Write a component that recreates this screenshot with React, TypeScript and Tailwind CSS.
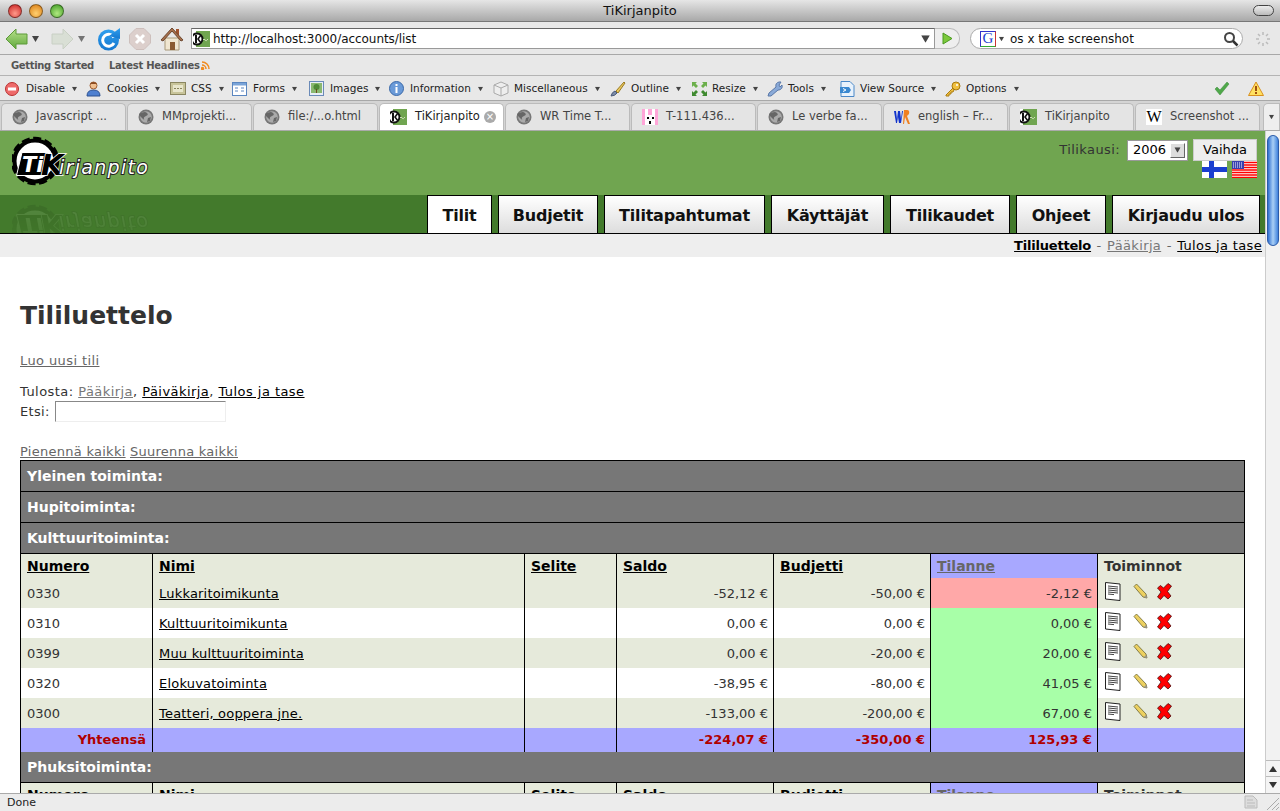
import React from "react";

const chrome = "font-['DejaVu_Sans',sans-serif]";

const Caret = ({ className = "" }: { className?: string }) => (
  <svg width="7" height="6" viewBox="0 0 7 6" className={className}>
    <path d="M0 0h7L3.5 6z" fill="#444" />
  </svg>
);

const Favicon = () => (
  <svg width="17" height="16" viewBox="0 0 17 16" className="shrink-0">
    <rect width="17" height="16" fill="#70a550" />
    <rect width="3" height="16" fill="#fff" />
    <circle cx="4" cy="8" r="6.500" fill="#111" />
    <circle cx="4" cy="8" r="4.500" fill="#fff" />
    <path d="M2 4h2v8H2zM4 8l3-4h2L6 8l3 4H7z" fill="#111" />
    <path d="M10 9q1-2 2 0t3-1" stroke="#cde0b8" strokeWidth="1" fill="none" />
  </svg>
);

const Globe = () => (
  <svg width="16" height="16" viewBox="0 0 16 16" className="shrink-0">
    <circle cx="8" cy="8" r="7.500" fill="#777" />
    <circle cx="8" cy="8" r="5.800" fill="#aaa" />
    <path d="M4 4q3-2 5 0t-1 3-2 3-3-2 1-4zM10 9l3-1-1 4-3 1z" fill="#666" />
  </svg>
);

const TUX = () => (
  <svg width="16" height="16" viewBox="0 0 16 16" className="shrink-0">
    <rect width="16" height="16" fill="#ffa6d8" />
    <rect x="3" y="0" width="3" height="7" fill="#fff" />
    <rect x="10" y="0" width="3" height="7" fill="#fff" />
    <rect x="3" y="6" width="10" height="10" fill="#fff" />
    <rect x="5" y="8" width="2" height="2" fill="#000" />
    <rect x="10" y="8" width="2" height="2" fill="#000" />
    <rect x="7" y="12" width="2" height="3" fill="#000" />
  </svg>
);

const WrIcon = () => (
  <svg width="16" height="16" viewBox="0 0 16 16" className="shrink-0">
    <path d="M0 2h2l1 8 1-8h2l1 8 1-8h1L7 14H5L4 8l-1 6H2z" fill="#1133cc" />
    <path d="M10 1h3q3 0 2 4l-2 2 3 8h-2l-3-7-1 7h-1z" fill="#f08020" />
  </svg>
);

const WikiIcon = () => (
  <span className="w-4 h-4 bg-white shrink-0 flex items-center justify-center font-['Liberation_Serif',serif] text-[16px] leading-none text-black">
    W
  </span>
);

const TrafficLight = ({ className }: { className: string }) => (
  <span className={`w-[14px] h-[14px] rounded-full border border-black/40 ${className}`} />
);

const BackArrow = () => (
  <svg width="23" height="22" viewBox="0 0 23 22">
    <defs>
      <linearGradient id="back" x1="0" y1="0" x2="0" y2="1">
        <stop offset="0" stopColor="#b8e08a" />
        <stop offset="1" stopColor="#5fa83c" />
      </linearGradient>
    </defs>
    <path d="M1 11 11 1v5h11v10H11v5z" fill="url(#back)" stroke="#5c9a38" />
  </svg>
);

const ForwardArrow = () => (
  <svg width="23" height="22" viewBox="0 0 23 22">
    <path d="M22 11 12 1v5H1v10h11v5z" fill="#d3dccd" stroke="#bcc6b6" />
  </svg>
);

const Reload = () => (
  <svg width="24" height="24" viewBox="0 0 24 24">
    <defs>
      <linearGradient id="reload" x1="0" y1="0" x2="0" y2="1">
        <stop offset="0" stopColor="#2f9fee" />
        <stop offset="1" stopColor="#1577cf" />
      </linearGradient>
    </defs>
    <circle cx="11.500" cy="13" r="10.500" fill="url(#reload)" />
    <path d="M17 10.500A6 6 0 1 0 17 16" stroke="#fff" strokeWidth="3" fill="none" />
    <path d="M12 9 23 1v11z" fill="url(#reload)" />
  </svg>
);

const StopIcon = () => (
  <svg width="22" height="22" viewBox="0 0 22 22">
    <path d="M7 .5h8L21.500 7v8L15 21.500H7L.5 15V7z" fill="#dccfcc" stroke="#cdbfbc" />
    <path d="m7 7 8 8M15 7l-8 8" stroke="#fff" strokeWidth="3" />
  </svg>
);

const HomeIcon = () => (
  <svg width="24" height="24" viewBox="0 0 24 24">
    <rect x="16" y="2" width="3" height="7" fill="#a0522d" />
    <path d="M5 11h14v12H5z" fill="#f0e6d0" stroke="#a89878" />
    <path d="M12 1 1 13l2 1 9-10 9 10 2-1z" fill="#a8704c" stroke="#6c4830" />
    <rect x="10" y="15" width="5" height="8" fill="#8a5a30" />
  </svg>
);

const DisableIcon = () => (
  <svg width="14" height="14" viewBox="0 0 14 14">
    <circle cx="7" cy="7" r="6.500" fill="#ee6a6a" stroke="#b83030" />
    <rect x="3" y="5.500" width="8" height="3" fill="#fff" />
  </svg>
);

const CookiesIcon = () => (
  <svg width="15" height="16" viewBox="0 0 15 16">
    <circle cx="7.500" cy="4.500" r="3.500" fill="#f0c090" stroke="#a06030" />
    <path d="M4 3q3-4 7 0z" fill="#8a4a20" />
    <path d="M1 15q0-6 6.500-6T14 15z" fill="#4f80d0" stroke="#2c5090" />
  </svg>
);

const CssIcon = () => (
  <svg width="16" height="13" viewBox="0 0 16 13">
    <rect x=".5" y=".5" width="15" height="12" fill="#c8c49a" stroke="#8a8660" />
    <rect x="3" y="3" width="10" height="7" fill="#e8e6cc" />
    <path d="M4 6.500h8" stroke="#88845c" strokeDasharray="2 1" />
  </svg>
);

const FormsIcon = () => (
  <svg width="15" height="14" viewBox="0 0 15 14">
    <rect x=".5" y=".5" width="14" height="13" fill="#fff" stroke="#5a86c0" />
    <rect x="1" y="1" width="13" height="2.500" fill="#7aa4d8" />
    <path d="M3 6h3M3 9h3M9 6h3M9 9h3" stroke="#5a86c0" />
  </svg>
);

const ImagesIcon = () => (
  <svg width="15" height="15" viewBox="0 0 15 15">
    <rect x=".5" y=".5" width="14" height="14" fill="#e8eef8" stroke="#6a8ab8" />
    <rect x="2" y="2" width="11" height="10" fill="#8ab870" />
    <circle cx="7.500" cy="6" r="3" fill="#4f8a38" />
    <rect x="7" y="8" width="1" height="4" fill="#6a4a20" />
  </svg>
);

const InfoIcon = () => (
  <svg width="15" height="15" viewBox="0 0 15 15">
    <circle cx="7.500" cy="7.500" r="7" fill="#6a9ad8" stroke="#3a68a8" />
    <rect x="6.500" y="6" width="2" height="6" fill="#fff" />
    <rect x="6.500" y="3" width="2" height="2" fill="#fff" />
  </svg>
);

const MiscIcon = () => (
  <svg width="16" height="16" viewBox="0 0 16 16">
    <path d="M8 1 15 4v8l-7 3-7-3V4z" fill="#eee" stroke="#aaa" />
    <path d="M1 4l7 3 7-3M8 7v8" fill="none" stroke="#aaa" />
  </svg>
);

const OutlineIcon = () => (
  <svg width="16" height="16" viewBox="0 0 16 16">
    <path d="M14 1 6 10l2 2 7-10z" fill="#e8c860" stroke="#9a7a20" />
    <path d="M5 10q-3 1-4 5 4 0 6-3z" fill="#7a8aa8" stroke="#4a5a78" />
  </svg>
);

const ResizeIcon = () => (
  <svg width="17" height="16" viewBox="0 0 17 16">
    <path d="M1 1h5L4.500 2.500 7 5 5 7 2.500 4.500 1 6zM16 1h-5l1.500 1.500L10 5l2 2 2.500-2.500L16 6z" fill="#6cb04c" />
    <path d="M1 15h5l-1.500-1.500L7 11 5 9l-2.500 2.500L1 10zM16 15h-5l1.500-1.500L10 11l2-2 2.500 2.500L16 10z" fill="#3f8a30" />
  </svg>
);

const ToolsIcon = () => (
  <svg width="16" height="16" viewBox="0 0 16 16">
    <path d="M1 15 2 12l7-6q-1-4 3-5l2 0-2 3 1 2 2-2q1 4-3 5l-1 0-7 6z" fill="#8aaad8" stroke="#5a78a8" />
  </svg>
);

const ViewSourceIcon = () => (
  <svg width="16" height="16" viewBox="0 0 16 16">
    <path d="M2 .5h9l4 4v11H2z" fill="#e8f2fc" stroke="#4a88c8" />
    <path d="M1 6h9l2 3-2 3H1z" fill="#3a88d0" />
    <path d="M4 7.500 7 9 4 10.500" stroke="#fff" fill="none" />
  </svg>
);

const KeyIcon = () => (
  <svg width="16" height="16" viewBox="0 0 16 16">
    <circle cx="11" cy="5" r="4" fill="#f0c040" stroke="#a87a10" />
    <circle cx="12" cy="4" r="1" fill="#fff" />
    <path d="m8 7-7 7v1h3v-2h2v-2h2l1-2z" fill="#f0c040" stroke="#a87a10" />
  </svg>
);

const CheckIcon = () => (
  <svg width="16" height="14" viewBox="0 0 16 14">
    <path d="M1 7 3 5l3 3 7-8 2 2-9 11z" fill="#4fa84a" stroke="#3a8838" strokeWidth=".5" />
  </svg>
);

const WarnIcon = () => (
  <svg width="16" height="15" viewBox="0 0 16 15">
    <path d="M8 1 15.500 14.500H.5z" fill="#ffe060" stroke="#d89020" />
    <rect x="7" y="5" width="2" height="5" fill="#a05010" />
    <rect x="7" y="11" width="2" height="2" fill="#a05010" />
  </svg>
);

const GoogleIcon = () => (
  <span className="w-[16px] h-[16px] bg-white border border-t-[#33c] border-l-[#33c] border-b-[#3a3] border-r-[#c33] flex items-center justify-center font-['Liberation_Serif',serif] text-[15px] leading-none text-[#2340d0]">
    G
  </span>
);

const Throbber = () => (
  <svg width="16" height="16" viewBox="0 0 16 16" stroke="#bbb" strokeWidth="1.500">
    <path d="M8 1v3M13 3l-2 2M15 8h-3M13 13l-2-2M8 15v-3M3 13l2-2M1 8h3M3 3l2 2" />
  </svg>
);

const Magnifier = () => (
  <svg width="16" height="16" viewBox="0 0 16 16" fill="none">
    <circle cx="6.500" cy="6.500" r="4.500" stroke="#444" strokeWidth="2" />
    <path d="m10 10 4.500 4.500" stroke="#333" strokeWidth="2.500" />
  </svg>
);

const devTools = [
  { label: "Disable", icon: <DisableIcon />, width: "w-[81px]" },
  { label: "Cookies", icon: <CookiesIcon />, width: "w-[84px]" },
  { label: "CSS", icon: <CssIcon />, width: "w-[62px]" },
  { label: "Forms", icon: <FormsIcon />, width: "w-[77px]" },
  { label: "Images", icon: <ImagesIcon />, width: "w-[80px]" },
  { label: "Information", icon: <InfoIcon />, width: "w-[104px]" },
  { label: "Miscellaneous", icon: <MiscIcon />, width: "w-[117px]" },
  { label: "Outline", icon: <OutlineIcon />, width: "w-[81px]" },
  { label: "Resize", icon: <ResizeIcon />, width: "w-[76px]" },
  { label: "Tools", icon: <ToolsIcon />, width: "w-[72px]" },
  { label: "View Source", icon: <ViewSourceIcon />, width: "w-[106px]" },
  { label: "Options", icon: <KeyIcon />, width: "w-[84px]" },
];

const tabs = [
  { label: "Javascript ...", icon: <Globe /> },
  { label: "MMprojekti...", icon: <Globe /> },
  { label: "file:/...o.html", icon: <Globe /> },
  { label: "TiKirjanpito", icon: <Favicon />, active: true },
  { label: "WR Time T...", icon: <Globe /> },
  { label: "T-111.436...", icon: <TUX /> },
  { label: "Le verbe fa...", icon: <Globe /> },
  { label: "english – Fr...", icon: <WrIcon /> },
  { label: "TiKirjanpito", icon: <Favicon /> },
  { label: "Screenshot ...", icon: <WikiIcon /> },
];

const BrowserChrome = () => (
  <div className={`${chrome} text-[11px] text-[#222] shrink-0`}>
    <div className="h-[22px] bg-gradient-to-b from-[#e6e6e6] to-[#a9a9a9] border-b border-[#777] flex items-center pl-2 pr-[6px]">
      <div className="w-[100px] flex gap-[7px]">
        <TrafficLight className="bg-[radial-gradient(circle_at_50%_70%,#ff9a8a,#c81e1e)]" />
        <TrafficLight className="bg-[radial-gradient(circle_at_50%_70%,#ffd070,#d87a10)]" />
        <TrafficLight className="bg-[radial-gradient(circle_at_50%_70%,#b0e880,#3c9a20)]" />
      </div>
      <span className="flex-1 text-center text-[13px] text-[#111]">TiKirjanpito</span>
      <div className="w-[102px] flex justify-end">
        <span className="w-[21px] h-[11px] rounded-[6px] border border-[#444] bg-gradient-to-b from-[#eee] to-[#bbb]" />
      </div>
    </div>

    <div className="h-[33px] pt-[1px] bg-[#e8e8e8] border-b border-[#a8a8a8] flex items-center">
      <div className="ml-[5px] w-[46px] flex items-center gap-[4px]">
        <BackArrow />
        <Caret />
      </div>
      <div className="w-[46px] flex items-center gap-[4px] opacity-70">
        <ForwardArrow />
        <Caret />
      </div>
      <div className="w-[32px]"><Reload /></div>
      <div className="w-[31px]"><StopIcon /></div>
      <div className="w-[31px]"><HomeIcon /></div>
      <div className="w-[744px] h-[21px] bg-white border border-[#999] border-t-[#666] flex items-center pl-[1px] pr-[4px]">
        <Favicon />
        <span className="ml-[3px] flex-1 text-[12px] tracking-[-0.05px] text-[#111]">http://localhost:3000/accounts/list</span>
        <Caret className="scale-125 mr-[1px]" />
      </div>
      <div className="w-[25px] h-[21px] bg-[#eee] border border-l-0 border-[#bbb] rounded-r-[10px] flex items-center justify-center">
        <svg width="11" height="13" viewBox="0 0 11 13">
          <path d="M1 1 10 6.500 1 12z" fill="#7cc93c" stroke="#4a9a20" />
        </svg>
      </div>
      <div className="ml-[10px] w-[273px] h-[21px] bg-white border border-[#aaa] rounded-[11px] flex items-center pl-[9px] pr-[3px]">
        <GoogleIcon />
        <Caret className="ml-[2px] scale-75" />
        <span className="ml-[5px] flex-1 text-[12px] text-[#111]">os x take screenshot</span>
        <Magnifier />
      </div>
      <div className="ml-[12px]"><Throbber /></div>
    </div>

    <div className="h-[21px] pt-[1px] bg-[#e8e8e8] border-b border-[#b4b4b4] flex items-center pl-[11px] font-bold text-[#555] text-[10px]">
      <span className="w-[98px] tracking-[-0.35px]">Getting Started</span>
      <span className="tracking-[-0.25px]">Latest Headlines</span>
      <svg width="9" height="9" viewBox="0 0 9 9" className="ml-[1px]" fill="none" stroke="#f08a20" strokeWidth="1.500">
        <path d="M1 1a7 7 0 0 1 7 7M1 4a4 4 0 0 1 4 4" />
        <circle cx="1.500" cy="7.500" r="1" fill="#f08a20" />
      </svg>
    </div>

    <div className="h-[25px] pt-[1px] bg-[#e8e8e8] border-b border-[#a8a8a8] flex items-center pl-[5px]">
      {devTools.map((tool) => (
        <div key={tool.label} className={`${tool.width} flex items-center shrink-0`}>
          <span className="w-[21px] flex items-center">{tool.icon}</span>
          <span className="text-[10.500px] whitespace-nowrap">{tool.label}</span>
          <Caret className="ml-[6px] scale-75" />
        </div>
      ))}
      <div className="ml-[185px]"><CheckIcon /></div>
      <div className="ml-[18px]"><WarnIcon /></div>
    </div>

    <div className="h-[30px] bg-[#d4d4d4] border-b border-[#aaa] flex items-end pl-[1px] gap-[1px]">
      {tabs.map((tab) => (
        <div
          key={tab.label + tab.active}
          className={`w-[125px] h-[27px] rounded-t-[5px] border border-b-0 border-[#bbb] flex items-center pl-[10px] text-[11.500px] ${
            tab.active ? "bg-white text-[#222]" : "bg-[#e4e4e4] text-[#444]"
          }`}
        >
          {tab.icon}
          <span className="ml-[8px] flex-1 whitespace-nowrap">{tab.label}</span>
          {tab.active && (
            <span className="mr-[7px] w-[12px] h-[12px] rounded-full bg-[#aaa] text-white text-[10px] leading-[12px] text-center">×</span>
          )}
        </div>
      ))}
      <div className="ml-[2px] flex-1 h-[27px] rounded-tl-[5px] bg-[#eee] border border-b-0 border-[#bbb] flex items-center justify-center">
        <Caret className="scale-75" />
      </div>
    </div>
  </div>
);

const Logo = ({ reflected = false }: { reflected?: boolean }) => (
  <svg width="140" height="56" viewBox="0 0 140 56" className={reflected ? "-scale-y-100" : ""}>
    <circle cx="23" cy="25" r="20.500" fill="#fff" stroke="#000" strokeWidth="4" />
    <circle cx="23" cy="25" r="22.500" fill="none" stroke="#000" strokeWidth="3.500" strokeDasharray="8 3.500" />
    <path d="M10 16.500h27L30 39.500H4.500z" fill="#000" stroke="#fff" strokeWidth="1" />
    <text x="10" y="36" fontFamily="DejaVu Sans" fontStyle="italic" fontWeight="bold" fontSize="21" fill="#fff">
      Ti
    </text>
    <text x="29" y="39" fontFamily="DejaVu Sans" fontStyle="italic" fontWeight="bold" fontSize="29" fill="#000" stroke="#fff" strokeWidth="1.500" paintOrder="stroke">
      K
    </text>
    <text x="47" y="38" fontFamily="DejaVu Sans" fontStyle="italic" fontSize="19" letterSpacing="1.300" fill="#fff" stroke="#222" strokeWidth="2" paintOrder="stroke">
      irjanpito
    </text>
  </svg>
);

const navItems = [
  { label: "Budjetit", width: "w-[100px]" },
  { label: "Tilitapahtumat", width: "w-[161px]" },
  { label: "Käyttäjät", width: "w-[113px]" },
  { label: "Tilikaudet", width: "w-[120px]" },
  { label: "Ohjeet", width: "w-[90px]" },
  { label: "Kirjaudu ulos", width: "w-[148px]" },
];

const FiFlag = () => (
  <svg width="25" height="17" viewBox="0 0 25 17">
    <rect width="25" height="17" fill="#fff" />
    <rect x="7" width="5" height="17" fill="#1a3fd0" />
    <rect y="6" width="25" height="5" fill="#1a3fd0" />
  </svg>
);

const UsFlag = () => (
  <svg width="25" height="17" viewBox="0 0 25 17">
    <rect width="25" height="17" fill="#fff" />
    <path d="M0 1.500h25M0 4h25M0 6.500h25M0 9h25M0 11.500h25M0 14h25M0 16.500h25" stroke="#f00" strokeWidth="1.300" />
    <rect width="12" height="8" fill="#3a3fb0" />
    <path d="M1 2h10M1 4h10M1 6h10" stroke="#fff" strokeDasharray="1 1" />
  </svg>
);

const SiteHeader = () => (
  <>
    <div className="h-[64px] bg-[#70a550] flex justify-between">
      <div className="ml-[12px] mt-[5px]"><Logo /></div>
      <div className="mr-[8px] mt-[8px] flex flex-col items-end">
        <div className="flex items-center h-[22px]">
          <span className="text-[13px] tracking-[0.4px] text-[#333] mr-[7px]">Tilikausi:</span>
          <div className="w-[61px] h-[21px] bg-white border border-[#999] flex items-center justify-between pl-[5px] pr-[2px] text-[13px] text-black">
            2006
            <span className="w-[15px] h-[15px] bg-[#ddd] border border-r-[#666] border-b-[#666] border-t-white border-l-white flex items-center justify-center">
              <Caret className="scale-90" />
            </span>
          </div>
          <button className="ml-[5px] w-[64px] h-[22px] bg-[#eee] border border-[#ccc] text-[13px] text-black">Vaihda</button>
        </div>
        <div className="flex gap-[5px]">
          <FiFlag />
          <UsFlag />
        </div>
      </div>
    </div>
    <div className="h-[39px] bg-[#437a2c] border-b border-black flex justify-end pr-[5px] relative overflow-hidden">
      <div className="absolute left-[12px] top-[3px] opacity-[0.1] [mask-image:linear-gradient(to_bottom,black,transparent)]">
        <Logo reflected />
      </div>
      <div className="w-[65px] h-[39px] pt-[2px] bg-white border-x border-t border-black border-b border-b-white text-[16px] tracking-[-0.2px] font-bold text-[#111] flex items-center justify-center">
        Tilit
      </div>
      {navItems.map((item) => (
        <div
          key={item.label}
          className={`${item.width} ml-[6px] pt-[2px] h-[38px] bg-gradient-to-b from-[#fff] to-[#ddd] border-x border-t border-black text-[16px] tracking-[-0.2px] font-bold text-[#111] flex items-center justify-center whitespace-nowrap`}
        >
          {item.label}
        </div>
      ))}
    </div>
    <div className="h-[23px] bg-[#eeeeee] flex items-center justify-end pr-[3px] text-[13px] tracking-[0.35px] text-[#666]">
      <a className="font-bold tracking-[-0.2px] text-black underline">Tililuettelo</a>
      <span className="mx-[5.5px]">-</span>
      <a className="text-[#777] underline">Pääkirja</a>
      <span className="mx-[5.5px]">-</span>
      <a className="text-black underline">Tulos ja tase</a>
    </div>
  </>
);

const accounts = [
  { num: "0330", name: "Lukkaritoimikunta", saldo: "-52,12 €", budget: "-50,00 €", status: "-2,12 €", over: true },
  { num: "0310", name: "Kulttuuritoimikunta", saldo: "0,00 €", budget: "0,00 €", status: "0,00 €" },
  { num: "0399", name: "Muu kulttuuritoiminta", saldo: "0,00 €", budget: "-20,00 €", status: "20,00 €" },
  { num: "0320", name: "Elokuvatoiminta", saldo: "-38,95 €", budget: "-80,00 €", status: "41,05 €" },
  { num: "0300", name: "Teatteri, ooppera jne.", saldo: "-133,00 €", budget: "-200,00 €", status: "67,00 €" },
];

const DocIcon = () => (
  <svg width="16" height="19" viewBox="0 0 16 19">
    <path d="M.5.5 15 2v16.500L.5 17z" fill="#fff" stroke="#222" />
    <path d="M3 4l10 1M3 6l10 1M3 8l10 1M3 10l10 1M3 12l6 .600" stroke="#444" />
  </svg>
);

const PencilIcon = () => (
  <svg width="15" height="16" viewBox="0 0 15 16" className="ml-[12px]">
    <path d="M1 3.500 3.500 1 13 11l1 4-4-1z" fill="#ecd060" stroke="#6a6434" strokeWidth=".8" />
    <path d="M11 14l3 1-1-3z" fill="#999" />
  </svg>
);

const CrossIcon = () => (
  <svg width="15" height="17" viewBox="0 0 15 17" className="ml-[9px]">
    <path d="M.5 5 3.500 2.500 6.500 5 11 .5 14.500 3 10.500 8.500 14 13 11 16 7 12.500 3.500 16.500.5 14 4 9z" fill="#f00" stroke="#300" strokeWidth=".7" />
  </svg>
);

const sortHeaders = ["Numero", "Nimi", "Selite", "Saldo", "Budjetti"];

const TableHead = () => (
  <tr className="h-[24px] bg-[#e6eadb] border-t border-black [&>th]:pt-[2px]">
    {sortHeaders.map((h) => (
      <th key={h} className="px-[6px] text-left border-r border-black text-[14px] font-bold">
        <a className="underline text-black">{h}</a>
      </th>
    ))}
    <th className="px-[6px] text-left border-r border-black text-[14px] font-bold bg-[#a8a8ff]">
      <a className="underline text-[#666]">Tilanne</a>
    </th>
    <th className="px-[6px] text-left text-[14px] font-bold text-[#333]">Toiminnot</th>
  </tr>
);

const SectionRow = ({ title, nudge = false }: { title: string; nudge?: boolean }) => (
  <tr className="h-[31px] bg-[#777777] border-b border-black last:border-b-0">
    <td colSpan={7} className={`px-[6px] text-[14px] font-bold text-white ${nudge ? "pt-[2px]" : ""}`}>{title}</td>
  </tr>
);

const AccountsTable = () => (
  <table className="w-[1224px] table-fixed border-collapse border border-black text-[13px] text-[#333]">
    <colgroup>
      <col className="w-[132px]" />
      <col className="w-[372px]" />
      <col className="w-[92px]" />
      <col className="w-[157px]" />
      <col className="w-[157px]" />
      <col className="w-[167px]" />
      <col className="w-[147px]" />
    </colgroup>
    <tbody>
      <SectionRow title="Yleinen toiminta:" />
      <SectionRow title="Hupitoiminta:" />
      <SectionRow title="Kulttuuritoiminta:" />
      <TableHead />
      {accounts.map((a, i) => {
        const base = i % 2 === 0 ? "bg-[#e6eadb]" : "bg-white";
        return (
          <tr key={a.num} className={`h-[30px] ${base} [&>td]:pt-[2px]`}>
            <td className="px-[6px] border-r border-black">{a.num}</td>
            <td className="px-[6px] border-r border-black tracking-[0.2px]">
              <a className="underline text-black">{a.name}</a>
            </td>
            <td className="border-r border-black" />
            <td className="pl-[6px] pr-[5px] text-right border-r border-black">{a.saldo}</td>
            <td className="pl-[6px] pr-[5px] text-right border-r border-black">{a.budget}</td>
            <td className={`pl-[6px] pr-[5px] text-right border-r border-black ${a.over ? "bg-[#ffa8a8]" : "bg-[#a8ffa8]"}`}>{a.status}</td>
            <td className="pl-[7px] pr-[6px]">
              <div className="flex items-center -mt-[5px]">
                <DocIcon />
                <PencilIcon />
                <CrossIcon />
              </div>
            </td>
          </tr>
        );
      })}
      <tr className="h-[24px] bg-[#a8a8ff] font-bold text-[#b00000]">
        <td className="px-[6px] text-right border-r border-black">Yhteensä</td>
        <td className="border-r border-black" />
        <td className="border-r border-black" />
        <td className="pl-[6px] pr-[5px] text-right border-r border-black">-224,07 €</td>
        <td className="pl-[6px] pr-[5px] text-right border-r border-black">-350,00 €</td>
        <td className="pl-[6px] pr-[5px] text-right border-r border-black">125,93 €</td>
        <td />
      </tr>
      <SectionRow title="Phuksitoiminta:" nudge />
      <TableHead />
    </tbody>
  </table>
);

const Scrollbar = () => (
  <div className="w-[15px] shrink-0 bg-[#f2f2f2] border-l border-[#ccc] flex flex-col">
    <div className="mt-[4px] mx-[1px] h-[111px] rounded-[7px] bg-gradient-to-r from-[#2f6fd0] via-[#a9cff5] to-[#3f82dc] border border-[#2a5aa8]" />
    <div className="flex-1" />
    <div className="h-[17px] flex items-center justify-center bg-[#f4f4f4] border-b border-[#bbb] border-t">
      <svg width="8" height="6" viewBox="0 0 8 6"><path d="M0 6h8L4 0z" fill="#333" /></svg>
    </div>
    <div className="h-[16px] flex items-center justify-center bg-[#f4f4f4]">
      <svg width="8" height="6" viewBox="0 0 8 6"><path d="M0 0h8L4 6z" fill="#333" /></svg>
    </div>
  </div>
);

export default function App() {
  return (
    <div className="w-[1280px] h-[811px] overflow-hidden flex flex-col bg-white font-['DejaVu_Sans',sans-serif]">
      <BrowserChrome />
      <div className="flex-1 min-h-0 flex overflow-hidden">
        <div className="flex-1 min-w-0 overflow-hidden">
          <SiteHeader />
          <div className="px-5 text-[13px] text-[#333]">
            <h1 className="mt-[44px] text-[25px] leading-[30px] font-bold text-[#333]">Tililuettelo</h1>
            <p className="mt-[22px] leading-[16px] tracking-[0.4px]">
              <a className="underline text-[#666]">Luo uusi tili</a>
            </p>
            <p className="mt-[15px] leading-[16px] tracking-[0.45px]">
              Tulosta: <a className="underline text-[#777]">Pääkirja</a>, <a className="underline text-black">Päiväkirja</a>,{" "}
              <a className="underline text-black">Tulos ja tase</a>
            </p>
            <div className="flex items-center h-[21px] mt-[1px] tracking-[0.3px]">
              Etsi:
              <input className="ml-[5px] w-[171px] h-[21px] border border-[#eee] border-t-[#888] border-l-[#888] bg-white" />
            </div>
            <p className="mt-[22px] leading-[16px] tracking-[0.27px]">
              <a className="underline text-[#666]">Pienennä kaikki</a> <a className="underline text-[#666]">Suurenna kaikki</a>
            </p>
            <AccountsTable />
          </div>
        </div>
        <Scrollbar />
      </div>
      <div className={`${chrome} h-[18px] pt-[1px] shrink-0 bg-[#ececec] border-t border-[#aaa] flex items-center text-[11px] text-[#222]`}>
        <span className="ml-[7px] flex-1">Done</span>
        <svg width="16" height="16" viewBox="0 0 16 16" className="mr-[6px]">
          <path d="M2 1h8l4 4v8H2z" fill="#ddd" stroke="#bbb" />
          <path d="M4 5h6M4 8h8M4 11h8" stroke="#bbb" />
        </svg>
        <svg width="15" height="15" viewBox="0 0 15 15" stroke="#aaa">
          <path d="M14 2 2 14M14 7l-7 7M14 11l-3 3" />
        </svg>
      </div>
    </div>
  );
}
